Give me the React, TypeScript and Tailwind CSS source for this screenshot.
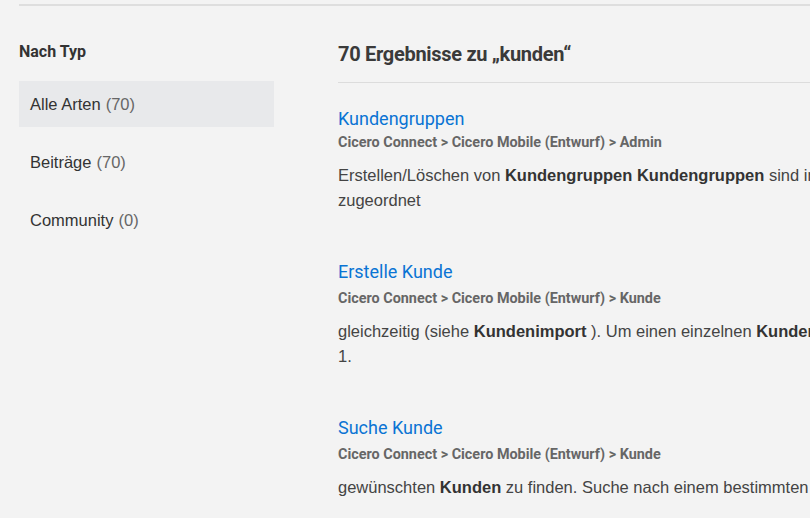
const results = [
  {
    title: "Kundengruppen",
    path: "Cicero Connect > Cicero Mobile (Entwurf) > Admin",
    lines: [
      <>
        Erstellen/Löschen von <b>Kundengruppen Kundengruppen</b> sind in der Administration den Benutzern
      </>,
      <>zugeordnet</>,
    ],
  },
  {
    title: "Erstelle Kunde",
    path: "Cicero Connect > Cicero Mobile (Entwurf) > Kunde",
    lines: [
      <>
        gleichzeitig (siehe <b>Kundenimport</b> ). Um einen einzelnen <b>Kunden</b> anzulegen, gehen Sie wie folgt vor:
      </>,
      <>1.</>,
    ],
  },
  {
    title: "Suche Kunde",
    path: "Cicero Connect > Cicero Mobile (Entwurf) > Kunde",
    lines: [
      <>
        gewünschten <b>Kunden</b> zu finden. Suche nach einem bestimmten <b>Kunden</b> über das Suchfeld
      </>,
    ],
  },
];

const filters = [
  { label: "Alle Arten", count: 70, active: true },
  { label: "Beiträge", count: 70, active: false },
  { label: "Community", count: 0, active: false },
];

export default function App() {
  return (
    <div className="h-[518px] w-[810px] overflow-hidden bg-[#f3f3f3] font-['Liberation_Sans',Arial,sans-serif] text-[#333]">
      <div className="ml-[19px] mt-[4px] border-t-2 border-[#dedede]">
        <div className="flex gap-[64px]">
          {/* Sidebar */}
          <aside className="w-[255px] shrink-0 pt-[34px]">
            <h2 className="font-['Roboto',sans-serif] text-[16px] font-bold text-[#333]">
              Nach Typ
            </h2>
            <ul className="mt-[17px] flex flex-col gap-[12px]">
              {filters.map((f) => (
                <li
                  key={f.label}
                  className={`flex h-[46px] items-center px-[11px] text-[16.5px] ${
                    f.active ? "bg-[#e8e9eb]" : ""
                  }`}
                >
                  <span className="text-[#333]">{f.label}</span>
                  <span className="ml-[5px] text-[#666]">({f.count})</span>
                </li>
              ))}
            </ul>
          </aside>

          {/* Results */}
          <main className="min-w-0 flex-1 pt-[33px]">
            <h1 className="pb-[13px] font-['Roboto',sans-serif] text-[20px] font-bold tracking-[-0.3px] text-[#3a3a3a]">
              70 Ergebnisse zu „kunden“
            </h1>
            <div className="border-t border-[#dcdcdc]" />
            <div className="pt-[24px]">
              {results.map((r, idx) => (
                <div key={r.title} className="mb-[47px]">
                  <a className="block font-['Roboto',sans-serif] text-[18px] leading-[24px] text-[#0a74d4]">
                    {r.title}
                  </a>
                  <div
                    className={`${idx === 0 ? "mt-0" : "mt-[3px]"} whitespace-nowrap font-['Roboto',sans-serif] text-[14.4px] font-bold leading-[24px] text-[#666]`}
                  >
                    {r.path}
                  </div>
                  <div className="mt-[8px] text-[16.5px] leading-[25px] text-[#444]">
                    {r.lines.map((l, i) => (
                      <div key={i} className="whitespace-nowrap [&_b]:text-[#333]">
                        {l}
                      </div>
                    ))}
                  </div>
                </div>
              ))}
            </div>
          </main>
        </div>
      </div>
    </div>
  );
}
